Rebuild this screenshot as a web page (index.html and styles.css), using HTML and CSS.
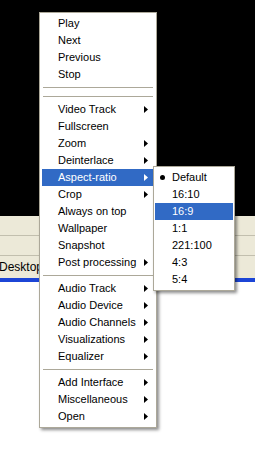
FILE: index.html
```html
<!DOCTYPE html>
<html lang="en">
    <head>
        <title>menu</title>
        <meta charset="UTF-8">
        <meta name="viewport" content="width=device-width, initial-scale=1">
        <link rel="stylesheet" href="styles.css">
    </head>
    <body>
        <div id="desk">
            <div class="screen"></div>
            <div class="bar"></div>
            <div class="bar"></div>
            <div class="task"><span class="taskText">Desktop</span></div>
            <div class="blue"></div>
        </div>

        <ul class="menu" id="mainMenu">
            <li class="item">Play</li>
            <li class="item">Next</li>
            <li class="item">Previous</li>
            <li class="item">Stop</li>
            <li class="sep"></li>
            <li class="sep"></li>
            <li class="item">Video Track<span class="arrow"></span></li>
            <li class="item">Fullscreen</li>
            <li class="item">Zoom<span class="arrow"></span></li>
            <li class="item">Deinterlace<span class="arrow"></span></li>
            <li class="item on">Aspect-ratio<span class="arrow"></span></li>
            <li class="item">Crop<span class="arrow"></span></li>
            <li class="item">Always on top</li>
            <li class="item">Wallpaper</li>
            <li class="item">Snapshot</li>
            <li class="item">Post processing<span class="arrow"></span></li>
            <li class="sep"></li>
            <li class="item">Audio Track<span class="arrow"></span></li>
            <li class="item">Audio Device<span class="arrow"></span></li>
            <li class="item">Audio Channels<span class="arrow"></span></li>
            <li class="item">Visualizations<span class="arrow"></span></li>
            <li class="item">Equalizer<span class="arrow"></span></li>
            <li class="sep"></li>
            <li class="item">Add Interface<span class="arrow"></span></li>
            <li class="item">Miscellaneous<span class="arrow"></span></li>
            <li class="item">Open<span class="arrow"></span></li>
        </ul>

        <ul class="menu" id="subMenu">
            <li class="item"><span class="dot"></span>Default</li>
            <li class="item">16:10</li>
            <li class="item on">16:9</li>
            <li class="item">1:1</li>
            <li class="item">221:100</li>
            <li class="item">4:3</li>
            <li class="item">5:4</li>
        </ul>
    </body>
</html>
```

FILE: styles.css
```css
body,ul,li{margin: 0;padding: 0}
li{list-style: none}

html,body{height: 100%;overflow: hidden;background: #fff;font: 11px "Liberation Sans", Arial, sans-serif;color: #000}

#desk .screen{height: 216px;background: #000}
#desk .bar{height: 19px;background: #ECE9D8;border-bottom: 1px solid #C2BFAE}
#desk .task{height: 22px;background: #ECE9D8;display: flex;align-items: center}
#desk .taskText{margin-left: -1px;font-size: 12px}
#desk .blue{height: 4px;background: #1C45D6}

.menu{position: absolute;background: #fff;border: 1px solid #ACA899;padding: 2px;
box-shadow: 2px 2px 3px rgba(0,0,0,.45)}
.menu .item{height: 17px;line-height: 17px;display: flex;align-items: center;position: relative;white-space: nowrap}
.menu .on{background: #316AC5;color: #fff}
.menu .sep{height: 9px;display: flex;align-items: center;margin: 0 1px}
.menu .sep::after{content: "";display: block;flex: 1;height: 1px;background: #ACA899}

#mainMenu{left: 39px;top: 12px;width: 112px}
#mainMenu .item{padding-left: 16px}
#mainMenu .arrow{position: absolute;right: 6px;top: 5px;width: 4px;height: 7px;background: currentColor;
clip-path: polygon(0 0, 100% 50%, 0 100%)}

#subMenu{left: 153px;top: 166px;width: 78px;padding: 2px 1px}
#subMenu .item{padding-left: 17px}
#subMenu .dot{position: absolute;left: 5px;top: 6px;width: 5px;height: 5px;border-radius: 50%;background: currentColor}
```
